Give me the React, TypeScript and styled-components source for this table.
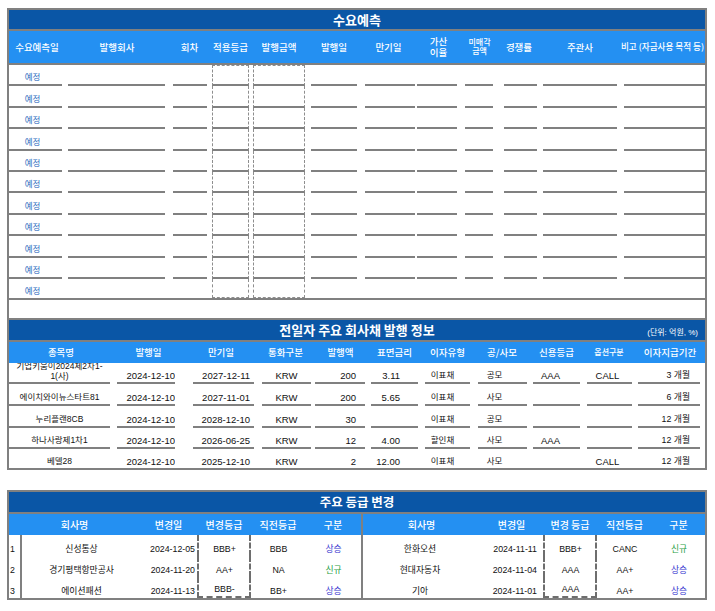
import styled, { createGlobalStyle, css } from "styled-components";

const DARK = "#0a56a6";
const LIGHT = "#2490f2";
const LINE = "#808080";
const DASH = "#8e8e8e";

type Align = "left" | "center" | "right";

const justify = (a?: Align) =>
  a === "left" ? "flex-start" : a === "right" ? "flex-end" : "center";

interface Col {
  w: number;
  l?: number;
  r?: number;
  align?: Align;
  pr?: number;
  size?: number;
  dash?: boolean;
}

const GlobalStyle = createGlobalStyle`
  *, *::before, *::after { box-sizing: border-box; }
  body {
    margin: 0;
    background: #ffffff;
    font-family: "Liberation Sans", "Noto Sans CJK KR", sans-serif;
    color: #111111;
  }
`;

const Page = styled.div`
  display: flex;
  flex-direction: column;
  gap: 20px;
  padding: 8px 0 0 7px;
`;

const Frame = styled.div`
  width: 700px;
  border: 2px solid ${LINE};
`;

const TitleBar = styled.div<{ $h: number }>`
  height: ${p => p.$h}px;
  background: ${DARK};
  color: #fff;
  display: grid;
  grid-template-columns: 1fr auto 1fr;
  align-items: center;
  border-bottom: 2px solid ${LINE};
`;

const Title = styled.div<{ $size: number }>`
  grid-column: 2;
  font-family: "Noto Sans CJK KR", sans-serif;
  font-weight: 700;
  font-size: ${p => p.$size}px;
  line-height: 1;
  white-space: nowrap;
`;

const Unit = styled.div`
  grid-column: 3;
  justify-self: end;
  align-self: end;
  padding: 0 7px 3px 0;
  font-size: 8px;
  line-height: 1;
  white-space: nowrap;
`;

const HeadRow = styled.div<{ $cols: string; $h: number; $line?: boolean }>`
  display: grid;
  grid-template-columns: ${p => p.$cols};
  height: ${p => p.$h}px;
  background: ${LIGHT};
  ${p => p.$line && css`border-bottom: 2px solid ${LINE};`}
`;

const HeadCell = styled.div<{ $size?: number; $span?: number; $sep?: boolean }>`
  display: flex;
  align-items: center;
  justify-content: center;
  text-align: center;
  white-space: pre-line;
  color: #fff;
  font-family: "Noto Sans CJK KR", sans-serif;
  font-weight: 500;
  font-size: ${p => p.$size ?? 9.5}px;
  line-height: 1.12;
  ${p => p.$span && css`grid-column: span ${p.$span};`}
  ${p => p.$sep && css`border-left: 2px solid ${LINE};`}
`;

const Row = styled.div<{ $cols: string; $h: number; $rule?: boolean }>`
  display: grid;
  grid-template-columns: ${p => p.$cols};
  height: ${p => p.$h}px;
  ${p => p.$rule && css`border-bottom: 2px solid ${LINE};`}
`;

interface SlotProps {
  $l: number;
  $r: number;
  $justify: string;
  $pr: number;
  $size: number;
  $lh?: number;
  $under?: boolean;
  $dash?: boolean;
  $dashTop?: boolean;
  $dashBottom?: boolean;
  $tone?: string;
}

const Slot = styled.div<SlotProps>`
  margin: 0 ${p => p.$r}px 0 ${p => p.$l}px;
  min-width: 0;
  display: flex;
  align-items: flex-end;
  justify-content: ${p => p.$justify};
  padding: 0 ${p => p.$pr}px 1px 0;
  overflow: hidden;
  font-size: ${p => p.$size}px;
  line-height: ${p => p.$lh ?? 11}px;
  white-space: pre-line;
  text-align: center;
  color: ${p => p.$tone ?? "#111"};
  border-bottom: ${p => (p.$under ? `2px solid ${LINE}` : "none")};
  ${p => p.$dash && css`
    border-left: 1px dashed ${DASH};
    border-right: 1px dashed ${DASH};
  `}
  ${p => p.$dashTop && css`border-top: 1px dashed ${DASH};`}
  ${p => p.$dashBottom && css`border-bottom: 1px dashed ${DASH};`}
`;

const Spacer = styled.div`
  height: 19.6px;
  border-bottom: 2px solid ${LINE};
`;

const GradeCell = styled.div<{
  $justify: string;
  $pr: number;
  $tone?: string;
  $dash?: boolean;
  $dashBottom?: boolean;
  $sepLeft?: boolean;
  $sepRight?: boolean;
}>`
  min-width: 0;
  display: flex;
  align-items: flex-end;
  justify-content: ${p => p.$justify};
  padding: 0 ${p => p.$pr}px 1px 1px;
  overflow: hidden;
  font-size: 8.8px;
  line-height: 11px;
  white-space: nowrap;
  color: ${p => p.$tone ?? "#111"};
  ${p => p.$dash && css`
    border-left: 2px dashed #6e6e6e;
    border-right: 2px dashed #6e6e6e;
  `}
  ${p => p.$dashBottom && css`border-bottom: 2px dashed #6e6e6e;`}
  ${p => p.$sepLeft && css`border-left: 2px solid ${LINE};`}
  ${p => p.$sepRight && css`border-right: 2px solid ${LINE};`}
`;

/* ---------- 수요예측 ---------- */

const demandCols: Col[] = [
  { w: 56, l: 0, r: 3, size: 8.5 },
  { w: 104, l: 3, r: 4 },
  { w: 41, l: 4, r: 3 },
  { w: 41, l: 2, r: 2, dash: true },
  { w: 56, l: 2, r: 2, dash: true },
  { w: 54, l: 4, r: 4 },
  { w: 55, l: 4, r: 1 },
  { w: 45, l: 1, r: 4 },
  { w: 37, l: 4, r: 5 },
  { w: 42, l: 6, r: 3 },
  { w: 80, l: 3, r: 3 },
  { w: 85, l: 4, r: 0 },
];

const demandHead: { label: string; size?: number }[] = [
  { label: "수요예측일" },
  { label: "발행회사" },
  { label: "회차" },
  { label: "적용등급" },
  { label: "발행금액" },
  { label: "발행일" },
  { label: "만기일" },
  { label: "가산\n이율" },
  { label: "미매각\n금액", size: 8 },
  { label: "경쟁률" },
  { label: "주관사" },
  { label: "비고 (자금사용 목적 등)", size: 8.6 },
];

const DEMAND_ROWS = 11;

/* ---------- 전일자 발행 정보 ---------- */

const issueCols: Col[] = [
  { w: 104, l: 0, r: 3, size: 8.5 },
  { w: 71, l: 4, r: 9, align: "right" },
  { w: 74, l: 9, r: 4, align: "right", pr: 4 },
  { w: 55, l: 4, r: 2 },
  { w: 55, l: 2, r: 3, align: "right", pr: 9 },
  { w: 53, l: 3, r: 3, align: "right", pr: 18 },
  { w: 53, l: 4, r: 4, pr: 10, size: 8.5 },
  { w: 56, l: 4, r: 3, pr: 16, size: 8.5 },
  { w: 53, l: 3, r: 3, pr: 12 },
  { w: 52, l: 4, r: 3, pr: 4 },
  { w: 70, l: 3, r: 5, align: "right", pr: 10, size: 8.8 },
];

const issueHead: { label: string; size?: number }[] = [
  { label: "종목명" },
  { label: "발행일" },
  { label: "만기일" },
  { label: "통화구분" },
  { label: "발행액" },
  { label: "표면금리" },
  { label: "이자유형" },
  { label: "공/사모" },
  { label: "신용등급" },
  { label: "옵션구분", size: 8 },
  { label: "이자지급기간" },
];

const issues: string[][] = [
  ["기업키움이2024제2차1-\n1(사)", "2024-12-10", "2027-12-11", "KRW", "200", "3.11", "이표채", "공모", "AAA", "CALL", "3 개월"],
  ["에이치와이뉴스타트81", "2024-12-10", "2027-11-01", "KRW", "200", "5.65", "이표채", "사모", "", "", "6 개월"],
  ["누리플랜8CB", "2024-12-10", "2028-12-10", "KRW", "30", "", "이표채", "공모", "", "", "12 개월"],
  ["하나사랑제1차1", "2024-12-10", "2026-06-25", "KRW", "12", "4.00", "할인채", "사모", "AAA", "", "12 개월"],
  ["베델28", "2024-12-10", "2025-12-10", "KRW", "2", "12.00", "이표채", "사모", "", "CALL", "12 개월"],
];

/* ---------- 주요 등급 변경 ---------- */

const gradeTemplate = "13px 118px 57px 54px 54px 56px 119px 63px 54px 55px 53px";

interface GradeChange {
  name: string;
  date: string;
  grade: string;
  prev: string;
  kind: "상승" | "신규";
}

const leftChanges: GradeChange[] = [
  { name: "신성통상", date: "2024-12-05", grade: "BBB+", prev: "BBB", kind: "상승" },
  { name: "경기평택항만공사", date: "2024-11-20", grade: "AA+", prev: "NA", kind: "신규" },
  { name: "에이션패션", date: "2024-11-13", grade: "BBB-", prev: "BB+", kind: "상승" },
];

const rightChanges: GradeChange[] = [
  { name: "한화오션", date: "2024-11-11", grade: "BBB+", prev: "CANC", kind: "신규" },
  { name: "현대자동차", date: "2024-11-04", grade: "AAA", prev: "AA+", kind: "상승" },
  { name: "기아", date: "2024-11-01", grade: "AAA", prev: "AA+", kind: "상승" },
];

const kindTone = { 상승: "#3535cf", 신규: "#1f9e45" };

const template = (cols: Col[]) => cols.map(c => `${c.w}px`).join(" ");

function App() {
  const demandTpl = template(demandCols);
  const issueTpl = template(issueCols);

  return (
    <>
      <GlobalStyle />
      <Page>
        <Frame>
          <TitleBar $h={21}>
            <Title $size={13}>수요예측</Title>
          </TitleBar>
          <HeadRow $cols={demandTpl} $h={34} $line>
            {demandHead.map(h => (
              <HeadCell key={h.label} $size={h.size}>{h.label}</HeadCell>
            ))}
          </HeadRow>
          {Array.from({ length: DEMAND_ROWS }).map((_, ri) => {
            const last = ri === DEMAND_ROWS - 1;
            return (
              <Row key={ri} $cols={demandTpl} $h={21.4} $rule={last}>
                {demandCols.map((c, ci) => (
                  <Slot
                    key={ci}
                    $l={c.l ?? 0}
                    $r={c.r ?? 0}
                    $justify="center"
                    $pr={ci === 0 ? 6 : 0}
                    $size={c.size ?? 9}
                    $tone={ci === 0 ? "#2d6cc0" : undefined}
                    $under={!last}
                    $dash={c.dash}
                    $dashTop={c.dash && ri === 0}
                    $dashBottom={c.dash && last}
                  >
                    {ci === 0 ? "예정" : ""}
                  </Slot>
                ))}
              </Row>
            );
          })}
          <Spacer />
          <TitleBar $h={22}>
            <Title $size={13}>전일자 주요 회사채 발행 정보</Title>
            <Unit>(단위: 억원, %)</Unit>
          </TitleBar>
          <HeadRow $cols={issueTpl} $h={21}>
            {issueHead.map(h => (
              <HeadCell key={h.label} $size={h.size}>{h.label}</HeadCell>
            ))}
          </HeadRow>
          {issues.map((row, ri) => {
            const last = ri === issues.length - 1;
            return (
              <Row key={ri} $cols={issueTpl} $h={last ? 18.6 : 21.6}>
                {row.map((v, ci) => {
                  const c = issueCols[ci];
                  return (
                    <Slot
                      key={ci}
                      $l={c.l ?? 0}
                      $r={c.r ?? 0}
                      $justify={justify(c.align)}
                      $pr={c.pr ?? 0}
                      $size={c.size ?? 9.5}
                      $lh={v.includes("\n") ? 9.6 : 11}
                      $under={!last}
                    >
                      {v}
                    </Slot>
                  );
                })}
              </Row>
            );
          })}
        </Frame>

        <Frame>
          <TitleBar $h={22}>
            <Title $size={12.5}>주요 등급 변경</Title>
          </TitleBar>
          <HeadRow $cols={gradeTemplate} $h={21}>
            <HeadCell $span={2} $size={10}>회사명</HeadCell>
            <HeadCell $size={10}>변경일</HeadCell>
            <HeadCell $size={10}>변경등급</HeadCell>
            <HeadCell $size={10}>직전등급</HeadCell>
            <HeadCell $size={10}>구분</HeadCell>
            <HeadCell $size={10} $sep>회사명</HeadCell>
            <HeadCell $size={10}>변경일</HeadCell>
            <HeadCell $size={10}>변경 등급</HeadCell>
            <HeadCell $size={10}>직전등급</HeadCell>
            <HeadCell $size={10}>구분</HeadCell>
          </HeadRow>
          {leftChanges.map((l, i) => {
            const r = rightChanges[i];
            const last = i === leftChanges.length - 1;
            return (
              <Row key={i} $cols={gradeTemplate} $h={21}>
                <GradeCell $justify="flex-start" $pr={0} $sepRight>{i + 1}</GradeCell>
                <GradeCell $justify="center" $pr={0}>{l.name}</GradeCell>
                <GradeCell $justify="flex-end" $pr={2}>{l.date}</GradeCell>
                <GradeCell $justify="center" $pr={0} $dash $dashBottom={last}>{l.grade}</GradeCell>
                <GradeCell $justify="center" $pr={0}>{l.prev}</GradeCell>
                <GradeCell $justify="center" $pr={0} $tone={kindTone[l.kind]}>{l.kind}</GradeCell>
                <GradeCell $justify="center" $pr={4} $sepLeft>{r.name}</GradeCell>
                <GradeCell $justify="flex-end" $pr={6}>{r.date}</GradeCell>
                <GradeCell $justify="center" $pr={0} $dash $dashBottom={last}>{r.grade}</GradeCell>
                <GradeCell $justify="center" $pr={0}>{r.prev}</GradeCell>
                <GradeCell $justify="center" $pr={0} $tone={kindTone[r.kind]}>{r.kind}</GradeCell>
              </Row>
            );
          })}
        </Frame>
      </Page>
    </>
  );
}

export default App;
